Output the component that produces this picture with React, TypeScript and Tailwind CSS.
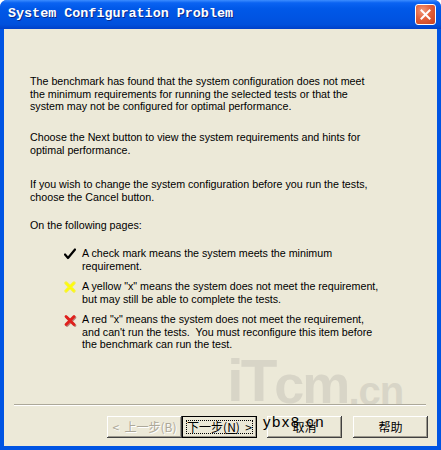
import React from 'react';

const CheckIcon = () => (
  <svg width="12" height="12" viewBox="0 0 12 12">
    <path d="M1 6.5 L4 10 L11 1.5" fill="none" stroke="#000" strokeWidth="2.2" strokeLinecap="round" strokeLinejoin="round" />
  </svg>
);

const YellowX = () => (
  <svg width="12" height="12" viewBox="0 0 12 12">
    <path d="M2 2 L10 10 M10 2 L2 10" stroke="#F6F23A" strokeWidth="3.2" strokeLinecap="round" />
    <path d="M2.5 2.5 L9.5 9.5 M9.5 2.5 L2.5 9.5" stroke="#FFFF00" strokeWidth="1.6" strokeLinecap="round" />
  </svg>
);

const RedX = () => (
  <svg width="13" height="13" viewBox="0 0 13 13">
    <path d="M3 3.5 L11 11.5 M11 3.5 L3 11.5" stroke="#8A1010" strokeWidth="2.6" strokeLinecap="round" opacity="0.5" />
    <path d="M2 2.5 L10 10.5 M10 2.5 L2 10.5" stroke="#E0201C" strokeWidth="2.8" strokeLinecap="round" />
  </svg>
);

const btn =
  'w-[75px] h-[22px] flex items-center justify-center bg-[#ECE9D8] text-[12px] font-["Noto_Sans_CJK_SC",sans-serif] shadow-[inset_-1px_-1px_#404040,inset_1px_1px_#ffffff,inset_-2px_-2px_#9d9a8e]';

export default function App() {
  return (
    <div className="w-[441px] h-[450px] bg-white">
      <div className="w-[441px] h-[450px] flex flex-col bg-[#0054E3] rounded-t-[7px] font-['Liberation_Sans',sans-serif]">
        {/* title bar */}
        <div className="h-[29px] shrink-0 flex items-center justify-between pl-[8px] pr-[5px] rounded-t-[7px] bg-[linear-gradient(to_bottom,#3C8DFF_0%,#0A63F2_10%,#0058E8_30%,#0054E3_60%,#0050DC_85%,#0040C8_100%)]">
          <span className="text-white font-bold text-[13.4px] font-['Liberation_Mono',monospace] [text-shadow:1px_1px_#0A2A8A] whitespace-pre">
            System Configuration Problem
          </span>
          <div className="w-[21px] h-[21px] rounded-[3px] border border-white bg-[radial-gradient(circle_at_35%_30%,#F29A7C_0%,#E2603A_45%,#C8401E_100%)] flex items-center justify-center">
            <svg width="11" height="11" viewBox="0 0 11 11">
              <path d="M1.5 1.5 L9.5 9.5 M9.5 1.5 L1.5 9.5" stroke="#fff" strokeWidth="2" strokeLinecap="square" />
            </svg>
          </div>
        </div>

        {/* body */}
        <div className="flex-1 mx-[4px] mb-[4px] bg-[#ECE9D8] flex flex-col relative">
          <div className="pl-[26px] pt-[46px] text-[10.7px] leading-[12.5px] text-black whitespace-nowrap">
            <p>
              The benchmark has found that the system configuration does not meet<br />
              the minimum requirements for running the selected tests or that the<br />
              system may not be configured for optimal performance.
            </p>
            <p className="mt-[18.5px]">
              Choose the Next button to view the system requirements and hints for<br />
              optimal performance.
            </p>
            <p className="mt-[22px]">
              If you wish to change the system configuration before you run the tests,<br />
              choose the Cancel button.
            </p>
            <p className="mt-[16px]">On the following pages:</p>

            <div className="flex mt-[15.5px] ml-[34px]">
              <div className="w-[18px] pt-[1px]"><CheckIcon /></div>
              <p>A check mark means the system meets the minimum<br />requirement.</p>
            </div>
            <div className="flex mt-[8px] ml-[34px]">
              <div className="w-[18px] pt-[1px]"><YellowX /></div>
              <p>A yellow "x" means the system does not meet the requirement,<br />but may still be able to complete the tests.</p>
            </div>
            <div className="flex mt-[8px] ml-[34px]">
              <div className="w-[18px] pt-[1px]"><RedX /></div>
              <p className="whitespace-pre">A red "x" means the system does not meet the requirement,<br />and can't run the tests.  You must reconfigure this item before<br />the benchmark can run the test.</p>
            </div>
          </div>

          {/* watermark */}
          <div className="absolute left-[223px] top-[322px] flex items-end text-[#D8D5C7] font-bold font-['Liberation_Sans',sans-serif] leading-none pointer-events-none select-none">
            <span className="text-[60px] tracking-[-3px]">iT</span>
            <span className="text-[54px] tracking-[-2px]">cm</span>
            <span className="text-[40px] tracking-[-1px]">.cn</span>
          </div>

          <div className="mt-auto relative">
            <div className="mx-[10px] mr-[11px] border-t border-[#ACA899] border-b border-b-white" />
            <div className="flex justify-end pr-[9px] pt-[10px] pb-[8px]">
              <div className={`${btn} text-[#ACA899] [text-shadow:1px_1px_#fff]`}>
                <span className="whitespace-pre">&lt;  上一步(B)</span>
              </div>
              <div className={`${btn} ring-1 ring-black ring-inset relative`}>
                <span className="absolute inset-[4px] border border-dotted border-black" />
                <span className="whitespace-pre relative">下一步(<span className="underline">N</span>)  &gt;</span>
              </div>
              <div className={`${btn} ml-[10px]`}>取消</div>
              <div className={`${btn} ml-[11px]`}>帮助</div>
            </div>
            <span className="absolute left-[259px] top-[7px] text-[15px] text-black font-['Liberation_Sans',sans-serif] tracking-[1.5px]">
              ybx8.cn
            </span>
          </div>
        </div>
      </div>
    </div>
  );
}
